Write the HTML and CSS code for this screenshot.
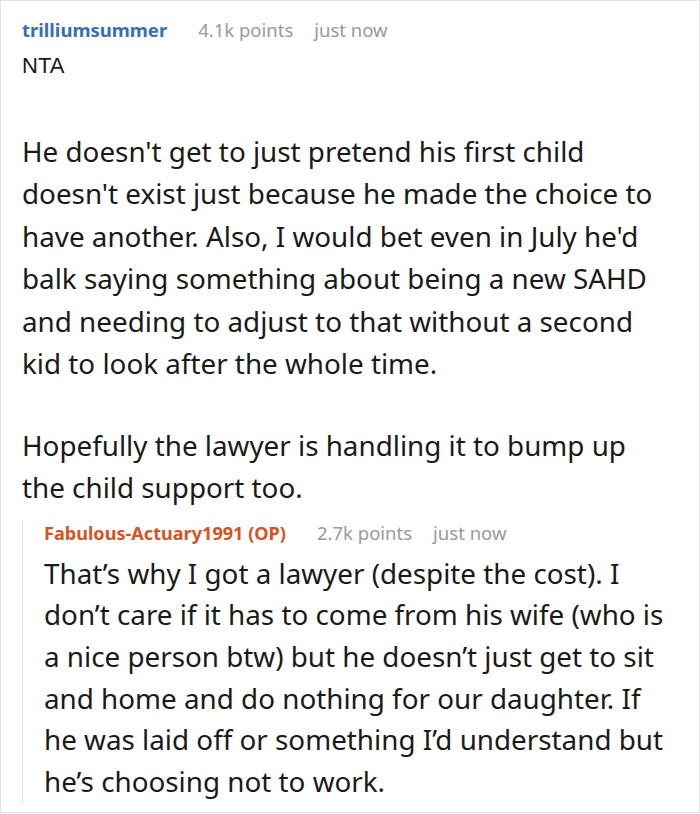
FILE: index.html
```html
<!DOCTYPE html>
<html>
<head>
<meta charset="utf-8">
<link rel="stylesheet" href="styles.css">
</head>
<body>
<div class="thread">
  <div class="meta">
    <span class="author">trilliumsummer</span>
    <span class="points">4.1k points</span>
    <span class="time">just now</span>
  </div>
  <div class="body">
    <p class="nta">NTA</p>
    <p>He doesn't get to just pretend his first child doesn't exist just because he made the choice to have another. Also, I would bet even in July he'd balk saying something about being a new SAHD and needing to adjust to that without a second kid to look after the whole time.</p>
    <p>Hopefully the lawyer is handling it to bump up the child support too.</p>
  </div>
  <div class="reply">
    <div class="meta">
      <span class="author op">Fabulous-Actuary1991 (OP)</span>
      <span class="points">2.7k points</span>
      <span class="time">just now</span>
    </div>
    <div class="body">
      <p>That’s why I got a lawyer (despite the cost). I don’t care if it has to come from his wife (who is a nice person btw) but he doesn’t just get to sit and home and do nothing for our daughter. If he was laid off or something I’d understand but he’s choosing not to work.</p>
    </div>
  </div>
</div>
</body>
</html>
```

FILE: styles.css
```css
html, body {
  margin: 0;
  padding: 0;
  background: #fff;
}
.thread {
  width: 700px;
  height: 813px;
  box-sizing: border-box;
  border: 1px solid #e2e2e2;
  padding: 16px 30px 0 21px;
  font-family: "Noto Sans", sans-serif;
  color: #1a1a1a;
  overflow: hidden;
}
.meta {
  font-size: 18.5px;
  line-height: 26px;
  display: flex;
  align-items: baseline;
}
.author {
  font-weight: bold;
  color: #3a6cb8;
}
.author.op {
  color: #d6531f;
  font-size: 18.1px;
}
.points {
  color: #999;
  margin-left: 31px;
}
.time {
  color: #999;
  margin-left: 21px;
}
.body {
  font-size: 27.8px;
  line-height: 42.5px;
}
.body p {
  margin: 0 0 39px 0;
}
.body .nta {
  font-family: "Liberation Sans", Arial, sans-serif;
  font-size: 22px;
  margin: 2px 0 42px 0;
}
.reply .body p {
  margin: 0;
}
.reply {
  border-left: 1px solid #e4e4e4;
  padding-left: 21px;
  margin-top: -28px;
}
.reply .meta {
  margin-bottom: 7px;
}
.reply .body {
  line-height: 41.7px;
}
```
